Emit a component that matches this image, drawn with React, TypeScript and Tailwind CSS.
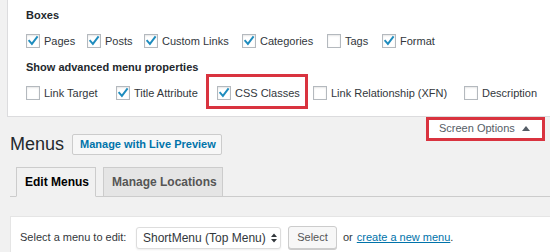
import React from "react";

function Cb({ checked }: { checked: boolean }) {
  return (
    <span className="w-[14px] h-[14px] shrink-0 border border-[#b4b9be] bg-white shadow-[inset_0_1px_2px_rgba(0,0,0,0.1)] flex items-center justify-center">
      {checked && (
        <svg width="12" height="12" viewBox="0 0 12 12">
          <path d="M1.6 5.2 L4.9 8.9 L10.6 1.4" fill="none" stroke="#1e8cbe" strokeWidth="1.9" />
        </svg>
      )}
    </span>
  );
}

function Item({ label, checked, w }: { label: string; checked: boolean; w: string }) {
  return (
    <label className={`flex items-center gap-[4px] ${w}`}>
      <Cb checked={checked} />
      <span className="text-[11px] leading-[14px] text-[#32373c] whitespace-nowrap">{label}</span>
    </label>
  );
}

export default function App() {
  return (
    <div className="w-[550px] h-[252px] overflow-hidden bg-[#f1f1f1] text-[#32373c] font-['Liberation_Sans',Arial,sans-serif]">
      {/* Screen options panel */}
      <div className="ml-[7px] h-[117px] bg-white border-l border-b border-[#dcdcde] pl-[18px] pt-[8px]">
        <div className="text-[11px] font-bold leading-[14px] text-[#23282d]">Boxes</div>
        <div className="mt-[12px] h-[14px] flex items-center">
          <Item label="Pages" checked w="w-[61px]" />
          <Item label="Posts" checked w="w-[57px]" />
          <Item label="Custom Links" checked w="w-[98px]" />
          <Item label="Categories" checked w="w-[85px]" />
          <Item label="Tags" checked={false} w="w-[55px]" />
          <Item label="Format" checked w="w-[70px]" />
        </div>
        <div className="mt-[12px] text-[11px] font-bold leading-[14px] text-[#23282d]">Show advanced menu properties</div>
        <div className="mt-[12px] h-[14px] flex items-center">
          <Item label="Link Target" checked={false} w="w-[90px]" />
          <Item label="Title Attribute" checked w="w-[101px]" />
          <div className="relative w-[96px]">
            <Item label="CSS Classes" checked w="w-[96px]" />
            <div className="absolute left-[-11px] top-[-12px] right-[5px] bottom-[-9px] border-[3px] border-[#d9333f] pointer-events-none" />
          </div>
          <Item label="Link Relationship (XFN)" checked={false} w="w-[151px]" />
          <Item label="Description" checked={false} w="w-[80px]" />
        </div>
      </div>

      {/* Screen Options tab */}
      <div className="float-right mr-[5px] w-[119px] h-[24px] border-[3px] border-[#d9333f] bg-white flex items-center pl-[10px] pb-[2px] gap-[7px]">
        <span className="text-[11px] leading-[14px] text-[#555d66]">Screen Options</span>
        <svg width="8" height="5" viewBox="0 0 8 5">
          <path d="M0 5 L4 0 L8 5 Z" fill="#555d66" />
        </svg>
      </div>

      {/* Heading */}
      <div className="flex items-center pt-[16px] pl-[10px] gap-[8px]">
        <h1 className="text-[18px] leading-[22px] font-normal text-[#23282d]">Menus</h1>
        <button className="h-[21px] w-[150px] border border-[#ccc] bg-[#f7f7f7] rounded-[2px] text-[11px] font-bold text-[#0073aa] pl-[7px] text-left">
          Manage with Live Preview
        </button>
      </div>

      {/* Tabs */}
      <div className="clear-both mt-[12px] ml-[10px] flex items-end pl-[6px] gap-[7px] border-b border-[#ccc]">
        <div className="w-[80px] h-[30px] -mb-px border border-[#ccc] border-b-[#f1f1f1] bg-[#f1f1f1] pl-[8px] flex items-center text-[12px] font-bold text-black">
          Edit Menus
        </div>
        <div className="w-[120px] h-[29px] border border-b-0 border-[#ccc] bg-[#e5e5e5] pl-[8px] flex items-center text-[12px] font-bold text-[#555]">
          Manage Locations
        </div>
      </div>

      {/* Manage menus bar */}
      <div className="mt-[19px] ml-[10px] h-[60px] bg-white border-l border-t border-[#e5e5e5] pt-[9px] pl-[9px]">
        <div className="flex items-center h-[23px]">
          <span className="text-[11px] text-[#32373c] w-[116px]">Select a menu to edit:</span>
          <div className="w-[145px] h-[22px] border border-[#ddd] rounded-[3px] bg-white shadow-[0_1px_2px_rgba(0,0,0,0.07)] pl-[6px] pr-[3px] flex items-center justify-between">
            <span className="text-[12px] text-[#32373c] whitespace-nowrap">ShortMenu (Top Menu)</span>
            <svg width="6" height="10" viewBox="0 0 6 10">
              <path d="M0 4 L3 0.5 L6 4 Z M0 6 L3 9.5 L6 6 Z" fill="#32373c" />
            </svg>
          </div>
          <button className="ml-[7px] w-[49px] h-[23px] border border-[#ccc] bg-[#f7f7f7] rounded-[3px] shadow-[0_1px_0_#ccc] text-[11px] text-[#555]">
            Select
          </button>
          <span className="ml-[6px] text-[11px] text-[#32373c]">or</span>
          <span className="ml-[4px] text-[11px] text-[#0073aa] underline">create a new menu</span>
          <span className="text-[11px] text-[#32373c]">.</span>
        </div>
      </div>
    </div>
  );
}
